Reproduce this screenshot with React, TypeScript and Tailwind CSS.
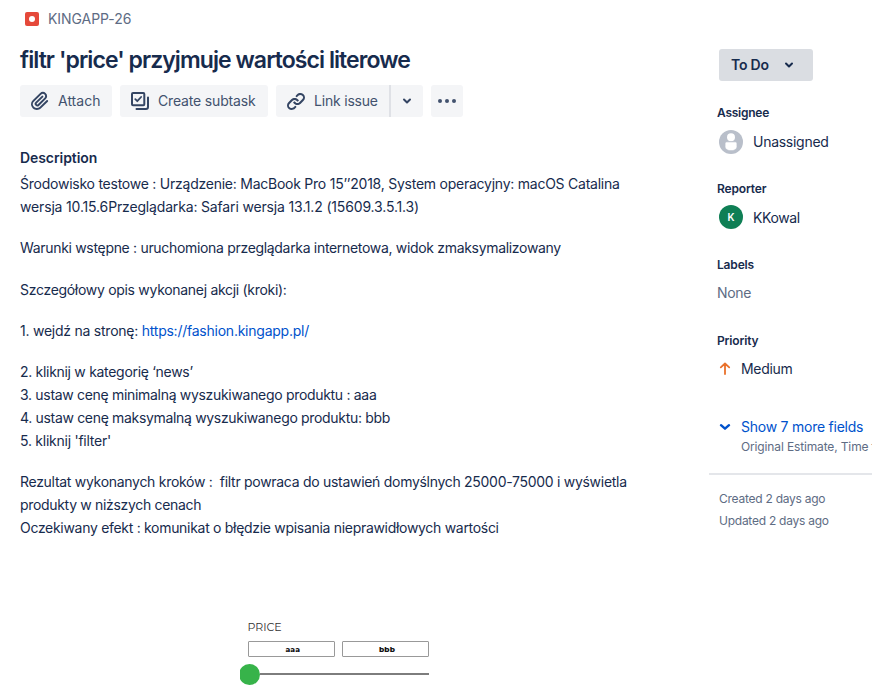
import type { ReactNode } from "react";

function AttachIcon() {
  return (
    <svg width="24" height="24" viewBox="0 0 24 24" fill="#344563">
      <path d="M11.643 17.965c-1.53 1.495-4.016 1.496-5.542.004a3.773 3.773 0 01.002-5.412l7.147-6.985a2.316 2.316 0 013.233-.003c.893.873.895 2.282.004 3.153l-6.703 6.55a.653.653 0 01-.914-.008.62.62 0 010-.902l6.229-6.087a.941.941 0 000-1.353.995.995 0 00-1.384 0l-6.23 6.087a2.502 2.502 0 000 3.607 2.643 2.643 0 003.683.009l6.703-6.55a4.074 4.074 0 00-.003-5.859 4.306 4.306 0 00-6.002.003l-7.148 6.985a5.655 5.655 0 00-.001 8.118c2.29 2.237 6.024 2.236 8.315-.003l6.823-6.67a.935.935 0 00.001-1.353.997.997 0 00-1.384-.001l-6.825 6.67z" />
    </svg>
  );
}

function SubtaskIcon() {
  return (
    <svg width="24" height="24" viewBox="0 0 24 24" fill="none" stroke="#344563" strokeWidth="2" strokeLinecap="round" strokeLinejoin="round">
      <rect x="4" y="4" width="12.3" height="12.3" rx="1" />
      <path d="M7.3 10.2l2 2 3.8-4.2" strokeWidth="1.8" />
      <path d="M20 8.5V18a2 2 0 0 1-2 2H8.5" />
    </svg>
  );
}

function LinkIcon() {
  return (
    <svg width="24" height="24" viewBox="0 0 24 24" fill="#344563">
      <path d="M12.856 5.457l-.937.92a1.002 1.002 0 000 1.437 1.047 1.047 0 001.463 0l.984-.966c.967-.95 2.542-1.135 3.602-.288a2.54 2.54 0 01.203 3.81l-2.903 2.852a2.646 2.646 0 01-3.696 0l-1.11-1.09L9 13.57l1.108 1.089c1.822 1.788 4.802 1.788 6.622 0l2.905-2.852a4.558 4.558 0 00-.357-6.82c-1.893-1.517-4.695-1.226-6.422.47z" />
      <path d="M11.144 19.543l.937-.92a1.002 1.002 0 000-1.437 1.047 1.047 0 00-1.462 0l-.985.966c-.967.95-2.542 1.135-3.602.288a2.54 2.54 0 01-.203-3.81l2.903-2.852a2.646 2.646 0 013.696 0l1.11 1.09L15 11.43l-1.108-1.089c-1.822-1.788-4.802-1.788-6.622 0l-2.905 2.852a4.558 4.558 0 00.357 6.82c1.893 1.517 4.695 1.226 6.422-.47z" />
    </svg>
  );
}

function Chevron({ className = "" }: { className?: string }) {
  return (
    <svg width="10" height="8" viewBox="0 0 10 8" fill="none" stroke="currentColor" strokeWidth="2" strokeLinecap="round" strokeLinejoin="round" className={className}>
      <path d="M2 2.5l3 3 3-3" />
    </svg>
  );
}

function ToolButton({ icon, label, className }: { icon: ReactNode; label: string; className: string }) {
  return (
    <button className={`flex h-8 items-center gap-1.5 bg-[#f4f5f7] pl-2 ${className}`}>
      {icon}
      <span className="pb-0.5">{label}</span>
    </button>
  );
}

function Line({ children, className }: { children: ReactNode; className: string }) {
  return <span className={`block whitespace-pre ${className}`}>{children}</span>;
}

function Field({ label, children, className = "" }: { label: string; children: ReactNode; className?: string }) {
  return (
    <section className="h-[76px] pl-2">
      <h3 className={`text-[12px] leading-4 font-semibold ${className}`}>{label}</h3>
      <div className="mt-[9px] flex h-6 items-center">{children}</div>
    </section>
  );
}

export default function App() {
  return (
    <div className="flex h-[697px] w-[872px] overflow-hidden bg-white font-['Inter',sans-serif] text-[14px] text-[#172b4d]">
      <main className="w-[709px] shrink-0 pl-5">
        <div className="mt-[9px] flex h-5 items-center pl-[5px] text-[#5e6c84]">
          <span className="flex size-[14px] items-center justify-center rounded-[2px] bg-[#e5493a]">
            <span className="size-1.5 rounded-full bg-white" />
          </span>
          <span className="pb-0.5 pl-[9px] tracking-[-0.07px]">KINGAPP-26</span>
        </div>
        <h1 className="mt-[17px] text-[23px] leading-7 font-[560] tracking-[-0.93px] whitespace-nowrap">
          filtr 'price' przyjmuje wartości literowe
        </h1>
        <div className="mt-[11px] flex gap-2 text-[#42526e]">
          <ToolButton icon={<AttachIcon />} label="Attach" className="w-[92px] rounded-[3px]" />
          <ToolButton icon={<SubtaskIcon />} label="Create subtask" className="w-[148px] rounded-[3px] tracking-[-0.16px]" />
          <div className="flex">
            <ToolButton icon={<LinkIcon />} label="Link issue" className="w-[113px] rounded-l-[3px] tracking-[-0.2px]" />
            <button className="flex h-8 w-[34px] items-center justify-center rounded-r-[3px] border-l-2 border-[#dfe1e6] bg-[#f4f5f7] text-[#344563]">
              <Chevron />
            </button>
          </div>
          <button className="flex size-8 items-center justify-center gap-[3px] rounded-[3px] bg-[#f4f5f7]">
            <span className="size-1 rounded-full bg-[#42526e]" />
            <span className="size-1 rounded-full bg-[#42526e]" />
            <span className="size-1 rounded-full bg-[#42526e]" />
          </button>
        </div>
        <h2 className="mt-[31px] leading-5 font-semibold tracking-[-0.07px]">Description</h2>
        <div className="mt-1 flex flex-col gap-[18.3px] leading-[23px]">
          <p>
            <Line className="tracking-[-0.243px]">Środowisko testowe : Urządzenie: MacBook Pro 15’’2018, System operacyjny: macOS Catalina</Line>
            <Line className="tracking-[-0.162px]">wersja 10.15.6Przeglądarka: Safari wersja 13.1.2 (15609.3.5.1.3)</Line>
          </p>
          <p>
            <Line className="tracking-[-0.318px]">Warunki wstępne : uruchomiona przeglądarka internetowa, widok zmaksymalizowany</Line>
          </p>
          <p>
            <Line className="tracking-[-0.3px]">Szczegółowy opis wykonanej akcji (kroki):</Line>
          </p>
          <p>
            <Line className="tracking-[-0.24px]">
              1. wejdź na stronę: <a className="text-[#0052cc]">https://fashion.kingapp.pl/</a>
            </Line>
          </p>
          <p>
            <Line className="tracking-[-0.3px]">2. kliknij w kategorię ‘news’</Line>
            <Line className="tracking-[-0.312px]">3. ustaw cenę minimalną wyszukiwanego produktu : aaa</Line>
            <Line className="tracking-[-0.325px]">4. ustaw cenę maksymalną wyszukiwanego produktu: bbb</Line>
            <Line className="tracking-[-0.25px]">5. kliknij 'filter'</Line>
          </p>
          <p>
            <Line className="tracking-[-0.29px]">{"Rezultat wykonanych kroków :  filtr powraca do ustawień domyślnych 25000-75000 i wyświetla"}</Line>
            <Line className="tracking-[-0.32px]">produkty w niższych cenach</Line>
            <Line className="tracking-[-0.3px]">Oczekiwany efekt : komunikat o błędzie wpisania nieprawidłowych wartości</Line>
          </p>
        </div>
        <div className="mt-20 ml-[220px] w-[200px] overflow-hidden font-['Montserrat',sans-serif]">
          <div className="pl-[7.5px] text-[11px] leading-4 text-[#333333]">PRICE</div>
          <div className="mt-[6px] flex gap-[7px] pl-[7.5px] text-[7.5px] font-extrabold text-[#111111]">
            <div className="flex h-4 w-[87.5px] items-center justify-center rounded-[1px] border border-[#999999] pl-[3px] tracking-[0.15px]">aaa</div>
            <div className="flex h-4 w-[87px] items-center justify-center rounded-[1px] border border-[#999999] pl-[3px] tracking-[0.15px]">bbb</div>
          </div>
          <div className="mt-[6px] flex h-[22px] items-center">
            <span className="-ml-[1px] size-[21px] shrink-0 rounded-full bg-[#37b34a]" />
            <span className="mb-[1px] h-[2px] w-[169px] bg-[#7d7d7d]" />
          </div>
        </div>
      </main>

      <aside className="w-[163px] shrink-0 overflow-hidden pt-[49px]">
        <button className="ml-[10px] flex h-8 w-[94px] items-center justify-between rounded-[3px] bg-[#dadde2] pr-[19px] pl-3 font-semibold tracking-[-0.2px]">
          <span className="pb-0.5">To Do</span>
          <Chevron />
        </button>
        <div className="mt-6">
          <Field label="Assignee" className="tracking-[-0.25px]">
            <svg width="24" height="24" viewBox="0 0 24 24" className="ml-0.5">
              <circle cx="12" cy="12" r="12" fill="#b9bfca" />
              <circle cx="12" cy="7.2" r="4" fill="#fff" />
              <path d="M6 13.7c0-1.2.8-1.9 1.9-1.9h8.2c1.1 0 1.9.7 1.9 1.9v2.8c0 2.7-2.6 4.2-6 4.2s-6-1.5-6-4.2z" fill="#fff" stroke="#b9bfca" strokeWidth=".8" />
            </svg>
            <span className="pb-0.5 pl-[10px] tracking-[-0.27px]">Unassigned</span>
          </Field>
          <Field label="Reporter" className="tracking-[-0.15px]">
            <span className="mb-0.5 ml-0.5 flex size-6 items-center justify-center rounded-full bg-[#0f7f55] text-[10px] font-semibold text-white">K</span>
            <span className="pb-0.5 pl-[10px] tracking-[-0.4px]">KKowal</span>
          </Field>
          <Field label="Labels" className="tracking-[-0.17px]">
            <span className="pb-[3px] tracking-[-0.3px] text-[#5e6c84]">None</span>
          </Field>
          <Field label="Priority" className="tracking-[-0.15px]">
            <svg width="12" height="13" viewBox="0 0 12 13" fill="none" stroke="#e9712b" strokeWidth="1.8" strokeLinecap="round" strokeLinejoin="round" className="mb-[3px] ml-[2px]">
              <path d="M6 12V1.7M1.8 5.4L6 1.5l4.2 3.9" />
            </svg>
            <span className="pb-[3px] pl-[10px] tracking-[-0.33px]">Medium</span>
          </Field>
        </div>
        <div className="mt-2 flex h-5 items-center pl-[10px] whitespace-nowrap text-[#0052cc]">
          <svg width="12" height="8" viewBox="0 0 12 8" fill="none" stroke="currentColor" strokeWidth="2.4" strokeLinecap="round" strokeLinejoin="round">
            <path d="M2 2.2l4 3.5 4-3.5" />
          </svg>
          <span className="pb-0.5 pl-[10px] tracking-[-0.24px]">Show 7 more fields</span>
        </div>
        <div className="mt-0.5 h-4 pl-8 text-[12px] leading-4 tracking-[-0.14px] whitespace-nowrap text-[#5e6c84]">Original Estimate, Time tracking</div>
        <div className="mt-[18px] h-[2px] bg-[#e4e6ea]" />
        <div className="mt-[13px] pl-[10px] text-[12px] leading-[22px] tracking-[-0.25px] text-[#5e6c84]">
          <p>Created 2 days ago</p>
          <p>Updated 2 days ago</p>
        </div>
      </aside>
    </div>
  );
}
